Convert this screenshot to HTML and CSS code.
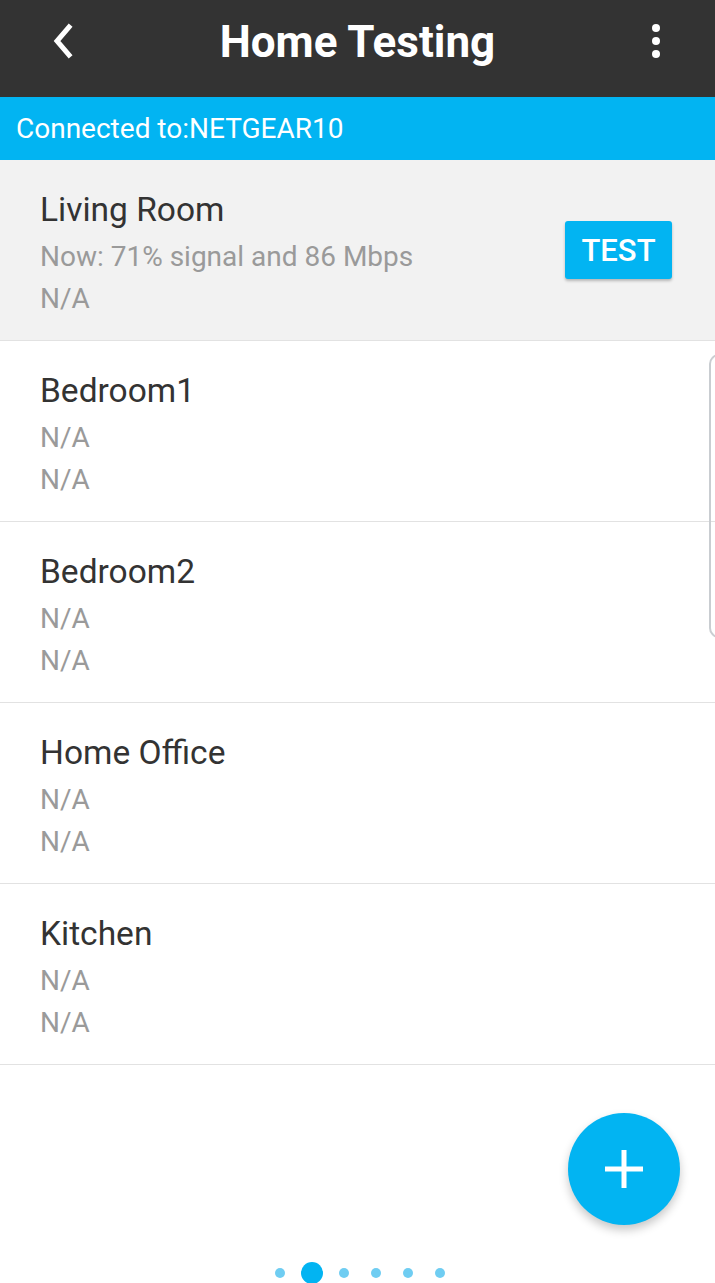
FILE: index.html
```html
<!DOCTYPE html>
<html>
<head>
<meta charset="utf-8">
<link rel="stylesheet" href="styles.css">
</head>
<body>
<div class="app">
  <header class="topbar">
    <button class="icon-btn back" aria-label="Back">
      <svg width="30" height="36" viewBox="0 0 30 36"><path d="M20 4 L8 18 L20 32" fill="none" stroke="#fff" stroke-width="5" stroke-linecap="square" stroke-linejoin="miter"/></svg>
    </button>
    <h1 class="title">Home Testing</h1>
    <button class="icon-btn more" aria-label="More">
      <svg width="12" height="40" viewBox="0 0 12 40"><circle cx="6" cy="7" r="4" fill="#fff"/><circle cx="6" cy="20" r="4" fill="#fff"/><circle cx="6" cy="33" r="4" fill="#fff"/></svg>
    </button>
  </header>
  <div class="conn">Connected to:NETGEAR10</div>
  <ul class="rooms">
    <li class="room active">
      <div class="room-text">
        <div class="room-name">Living Room</div>
        <div class="room-sub">Now: 71% signal and 86 Mbps</div>
        <div class="room-sub">N/A</div>
      </div>
      <button class="test-btn">TEST</button>
    </li>
    <li class="room">
      <div class="room-text">
        <div class="room-name">Bedroom1</div>
        <div class="room-sub">N/A</div>
        <div class="room-sub">N/A</div>
      </div>
    </li>
    <li class="room">
      <div class="room-text">
        <div class="room-name">Bedroom2</div>
        <div class="room-sub">N/A</div>
        <div class="room-sub">N/A</div>
      </div>
    </li>
    <li class="room">
      <div class="room-text">
        <div class="room-name">Home Office</div>
        <div class="room-sub">N/A</div>
        <div class="room-sub">N/A</div>
      </div>
    </li>
    <li class="room">
      <div class="room-text">
        <div class="room-name">Kitchen</div>
        <div class="room-sub">N/A</div>
        <div class="room-sub">N/A</div>
      </div>
    </li>
  </ul>
  <div class="footer">
    <button class="fab" aria-label="Add">
      <svg width="40" height="40" viewBox="0 0 40 40"><path d="M20 1 V39 M1 20 H39" stroke="#fff" stroke-width="5"/></svg>
    </button>
    <div class="dots">
      <span class="dot"></span>
      <span class="dot current"></span>
      <span class="dot"></span>
      <span class="dot"></span>
      <span class="dot"></span>
      <span class="dot"></span>
    </div>
  </div>
  <div class="edge-handle"></div>
</div>
</body>
</html>
```
FILE: styles.css
```css
* { box-sizing: border-box; }
html, body { margin: 0; padding: 0; background: #fff; }
body { font-family: Roboto, "Liberation Sans", sans-serif; }
.app {
  position: relative;
  width: 715px;
  height: 1283px;
  overflow: hidden;
  display: flex;
  flex-direction: column;
}
.topbar {
  height: 97px;
  background: #333333;
  display: grid;
  grid-template-columns: 1fr auto 1fr;
  align-items: center;
  padding: 0 53px 13px 49px;
}
.icon-btn {
  background: none;
  border: 0;
  padding: 0;
  display: flex;
  align-items: center;
  justify-content: center;
}
.back { width: 30px; justify-self: start; margin-bottom: 3px; }
.more { width: 12px; justify-self: end; margin-bottom: 2px; }
.title {
  margin: 0;
  color: #fff;
  font-size: 44px;
  font-weight: 700;
  line-height: 52px;
  text-align: center;
  padding-left: 4px;
}
.conn {
  height: 63px;
  background: #02b4f2;
  color: #fff;
  font-size: 28px;
  line-height: 63px;
  padding: 0 0 0 16px;
}
.rooms {
  list-style: none;
  margin: 0;
  padding: 0;
}
.room {
  height: 181px;
  border-bottom: 1px solid #e2e2e2;
  display: flex;
  align-items: center;
  padding: 0 43px 0 40px;
}
.room.active { background: #f2f2f2; }
.room-text {
  flex: 1;
  align-self: flex-start;
  padding-top: 23px;
}
.room-name {
  font-size: 33.5px;
  line-height: 53px;
  color: #333;
}
.room-sub {
  font-size: 28px;
  line-height: 42px;
  color: #9a9a9a;
}
.test-btn {
  width: 107px;
  height: 58px;
  background: #02b4f2;
  color: #fff;
  border: 0;
  border-radius: 3px;
  font-family: Roboto, "Liberation Sans", sans-serif;
  font-size: 31px;
  font-weight: 500;
  box-shadow: 0 2px 3px rgba(0,0,0,0.25);
  margin-top: 0;
}
.footer {
  flex: 1;
  position: relative;
  display: flex;
  align-items: flex-end;
  justify-content: center;
}
.fab {
  position: absolute;
  left: 568px;
  top: 48px;
  width: 112px;
  height: 112px;
  border-radius: 50%;
  border: 0;
  background: #02b4f2;
  display: flex;
  align-items: center;
  justify-content: center;
  box-shadow: 0 5px 10px rgba(0,0,0,0.22);
}
.dots {
  display: flex;
  align-items: center;
  gap: 22px;
  height: 22px;
  margin-bottom: -1px;
  padding-left: 5px;
}
.dot {
  width: 10px;
  height: 10px;
  border-radius: 50%;
  background: #6fcdf2;
}
.dot.current {
  width: 22px;
  height: 22px;
  background: #02b4f2;
  margin: 0 -6px;
}
.edge-handle {
  position: absolute;
  left: 709px;
  top: 354px;
  width: 12px;
  height: 284px;
  border: 2px solid #c9cdd1;
  border-right: 0;
  border-radius: 10px 0 0 10px;
}
```
